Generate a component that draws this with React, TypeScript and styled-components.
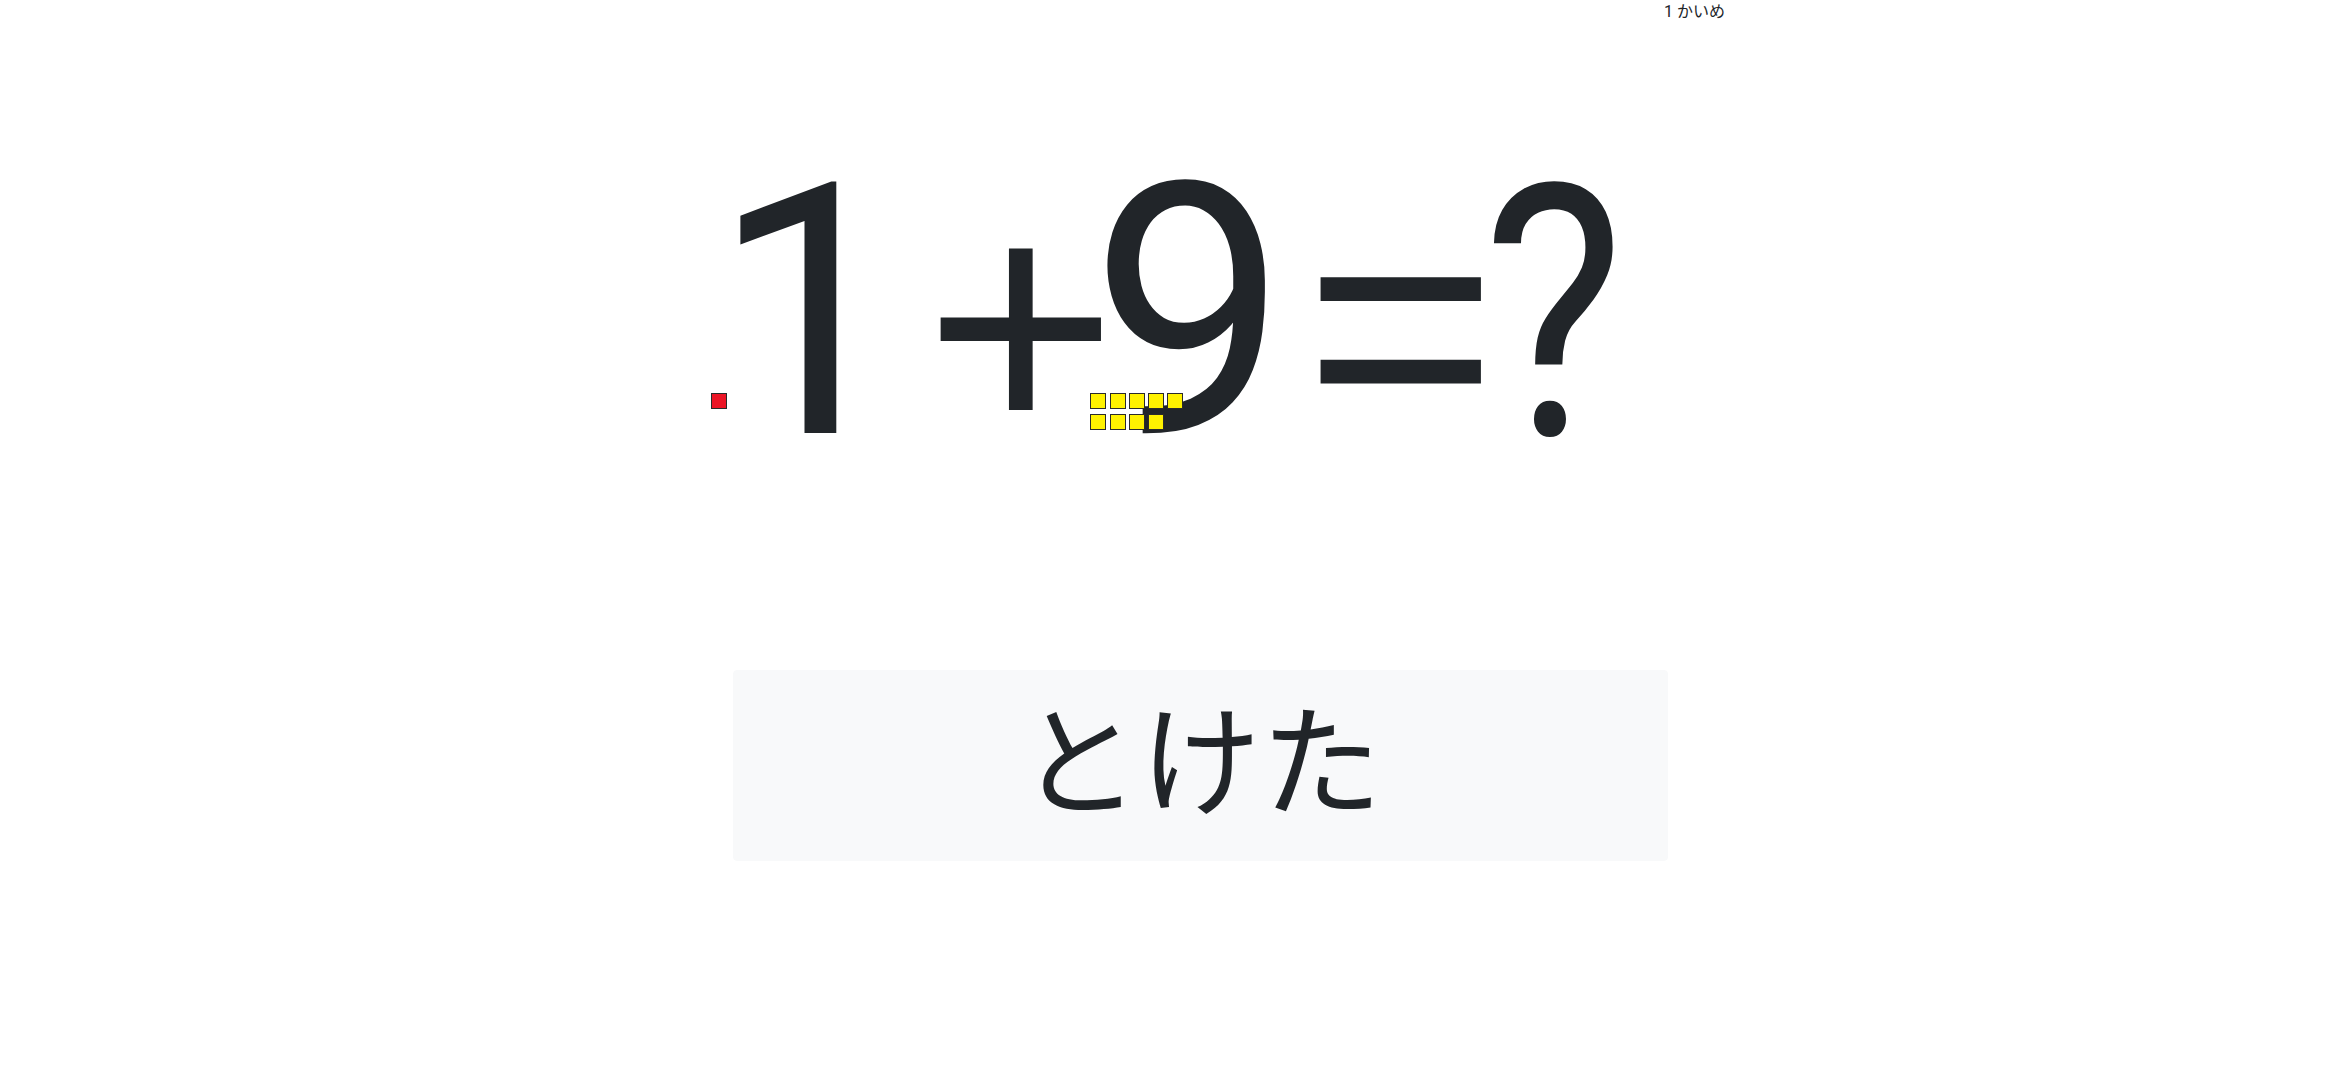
import React from "react";
import styled, { createGlobalStyle } from "styled-components";

const GlobalStyle = createGlobalStyle`
  html, body {
    margin: 0;
    padding: 0;
    background: #ffffff;
  }
  body {
    font-family: Roboto, "Liberation Sans", "Noto Sans CJK JP", sans-serif;
    color: #212529;
    font-size: 16px;
    line-height: 1.5;
  }
`;

const Page = styled.div`
  width: 1110px;
  margin: 0 auto;
  display: flex;
  flex-direction: column;
`;

const Round = styled.div`
  text-align: right;
  font-size: 16px;
  line-height: 24px;
  font-family: Roboto, "Noto Sans CJK JP", sans-serif;
  color: #212529;
`;

const Equation = styled.div`
  display: flex;
  align-items: flex-start;
  height: 350px;
  margin-top: 113px;
  padding-left: 96px;
  font-weight: 400;
  color: #212529;
  white-space: nowrap;
`;

const Cell = styled.div<{ $shift: number }>`
  position: relative;
  margin-left: ${(p) => p.$shift}px;
  line-height: 1;
`;

const Digit = styled(Cell)`
  font-family: Roboto, "Liberation Sans", sans-serif;
  font-size: 352px;
`;

const Operator = styled(Cell)`
  font-family: "Liberation Sans", Arial, sans-serif;
  font-size: 330px;
  padding-top: 23px;
`;

const Question = styled(Cell)`
  font-family: Roboto, "Liberation Sans", sans-serif;
  font-size: 352px;
  padding-top: 2px;
  transform: scaleX(0.85);
  transform-origin: left top;
`;

const Dots = styled.div`
  position: absolute;
  left: 0;
  top: 256px;
  width: 94px;
  display: flex;
  flex-wrap: wrap;
  column-gap: 3.3px;
  row-gap: 5px;
`;

const Dot = styled.span<{ $color: string }>`
  box-sizing: border-box;
  width: 16px;
  height: 16px;
  background: ${(p) => p.$color};
  border: 1px solid #2b2b2b;
`;

const SolvedButton = styled.button`
  box-sizing: border-box;
  margin-top: 183px;
  margin-left: 118px;
  width: 935px;
  height: 191px;
  background: #f8f9fa;
  border: 1px solid #f8f9fa;
  border-radius: 4px;
  color: #212529;
  font-family: "Noto Sans CJK JP", sans-serif;
  font-size: 121px;
  font-weight: 400;
  line-height: 1;
  padding: 0 0 24px 0;
  display: flex;
  align-items: center;
  justify-content: center;
  cursor: pointer;
`;

function DotGroup({ count, color }: { count: number; color: string }) {
  return (
    <Dots>
      {Array.from({ length: count }, (_, i) => (
        <Dot key={i} $color={color} />
      ))}
    </Dots>
  );
}

export default function App() {
  return (
    <>
      <GlobalStyle />
      <Page>
        <Round>1 かいめ</Round>
        <Equation>
          <Digit $shift={0}>
            1
            <DotGroup count={1} color="#ec1526" />
          </Digit>
          <Operator $shift={15.7}>+</Operator>
          <Digit $shift={-27}>
            9
            <DotGroup count={9} color="#fff200" />
          </Digit>
          <Operator $shift={16.4}>=</Operator>
          <Question $shift={-14}>?</Question>
        </Equation>
        <SolvedButton>とけた</SolvedButton>
      </Page>
    </>
  );
}
